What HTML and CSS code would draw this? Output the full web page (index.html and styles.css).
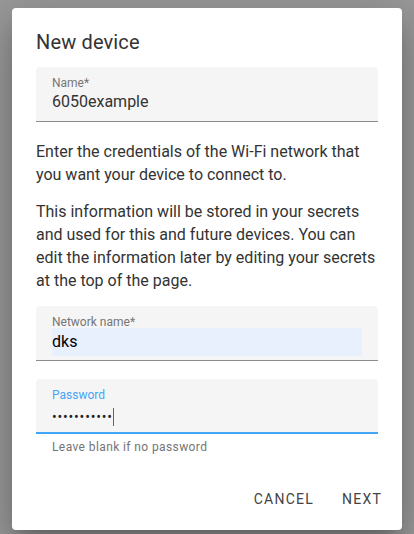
FILE: index.html
```html
<!DOCTYPE html>
<html lang="en">
<head>
    <meta charset="UTF-8">
    <meta name="viewport" content="width=device-width, initial-scale=1.0">
    <title>New device</title>
    <link rel="stylesheet" href="styles.css">
</head>
<body>
    <div class="dialog">
        <h2 class="dialog-title">New device</h2>

        <div class="field">
            <span class="field-label">Name*</span>
            <div class="field-value">6050example</div>
        </div>

        <p class="info first">Enter the credentials of the Wi-Fi network that you want your device to connect to.</p>
        <p class="info last">This information will be stored in your secrets and used for this and future devices. You can edit the information later by editing your secrets at the top of the page.</p>

        <div class="field">
            <span class="field-label">Network name*</span>
            <div class="field-value autofill">dks</div>
        </div>

        <div class="field focused">
            <span class="field-label">Password</span>
            <div class="field-value dots">&bull;&bull;&bull;&bull;&bull;&bull;&bull;&bull;&bull;&bull;&bull;<span class="caret"></span></div>
        </div>
        <div class="helper">Leave blank if no password</div>

        <div class="actions">
            <button class="btn">Cancel</button>
            <button class="btn">Next</button>
        </div>
    </div>
</body>
</html>
```

FILE: styles.css
```css
body {
    margin: 0;
    background-color: #999;
    font-family: Roboto, "Liberation Sans", sans-serif;
    height: 534px;
    overflow: hidden;
}

.dialog {
    box-sizing: border-box;
    width: 390px;
    margin: 8px 0 0 12px;
    padding: 24px 24px 3px 24px;
    background-color: #fff;
    border-radius: 4px;
    box-shadow: 0px 11px 15px -7px rgba(0, 0, 0, 0.2), 0px 24px 38px 3px rgba(0, 0, 0, 0.14), 0px 9px 46px 8px rgba(0, 0, 0, 0.12);
}

.dialog-title {
    margin: 0 0 15px 0;
    font-size: 20px;
    font-weight: 400;
    line-height: 20px;
    color: #333;
    letter-spacing: 0.15px;
}

.field {
    height: 55px;
    box-sizing: border-box;
    padding: 9px 16px 0 16px;
    background-color: #f5f5f5;
    border-radius: 4px 4px 0 0;
    border-bottom: 1px solid #8c8c8c;
}

.field-label {
    display: block;
    font-size: 12px;
    line-height: 14px;
    color: #757575;
}

.field-value {
    font-size: 16px;
    line-height: 24px;
    color: #333;
}

.autofill {
    width: 310px;
    background-color: #e8f0fe;
    line-height: 28px;
    margin-top: -1px;
    color: #000;
}

.focused {
    margin-top: 18px;
    border-bottom: 2px solid #42a5f5;
}

.focused .field-label {
    color: #42a5f5;
}

.dots {
    font-size: 14px;
    line-height: 24px;
    letter-spacing: 0.8px;
    display: flex;
    align-items: center;
    margin-top: 3px;
    color: #222;
}

.caret {
    display: inline-block;
    width: 1px;
    height: 18px;
    background-color: #1976d2;
}

.helper {
    padding: 5px 16px 0 16px;
    font-size: 12px;
    line-height: 16px;
    color: #757575;
    letter-spacing: 0.4px;
}

.info {
    margin: 14px 0;
    font-size: 16px;
    line-height: 23px;
    color: #333;
}

.info.first {
    margin-top: 18px;
}

.info.last {
    margin-bottom: 14px;
}

.actions {
    display: flex;
    justify-content: flex-end;
    gap: 8px;
    margin-top: 28px;
    margin-right: -16px;
    padding-bottom: 12px;
}

.btn {
    background: none;
    border: none;
    padding: 8px 8px;
    font-family: inherit;
    font-size: 14px;
    letter-spacing: 1.25px;
    text-transform: uppercase;
    color: #444;
    min-width: 64px;
}
```
